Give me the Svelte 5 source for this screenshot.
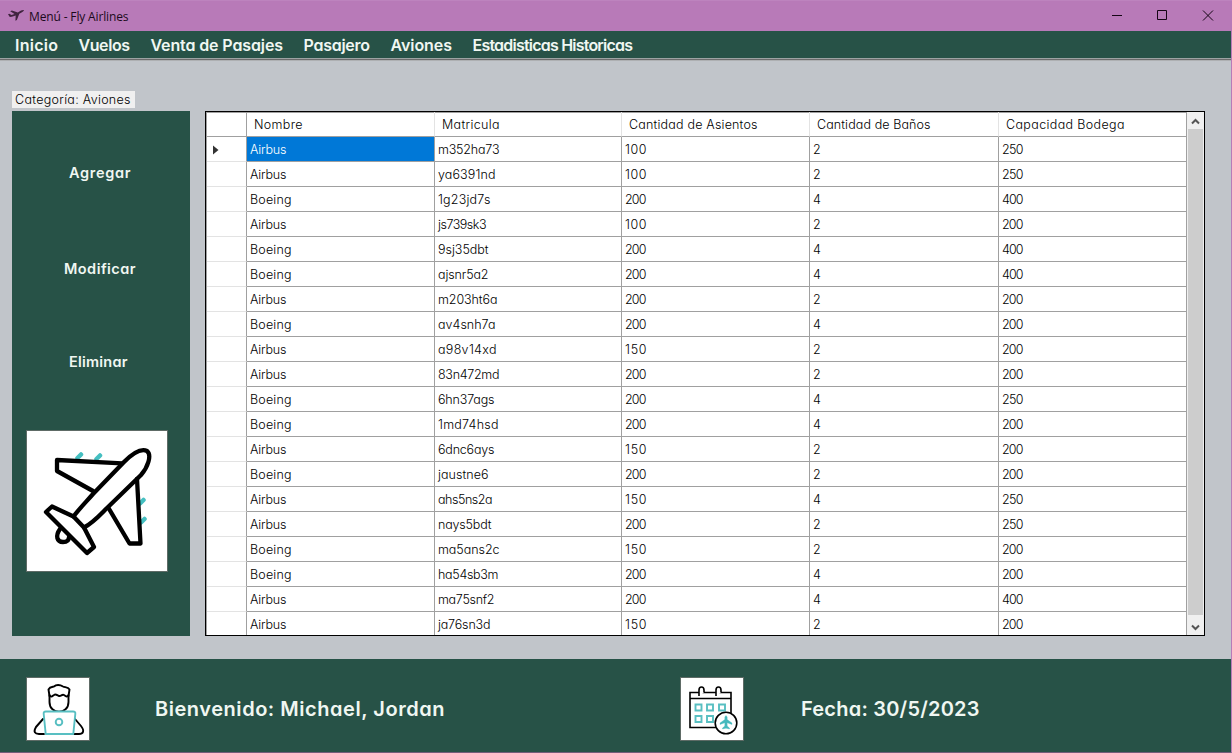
<script>
  const menu = [
    ['Inicio', 42.5], ['Vuelos', 51], ['Venta de Pasajes', 132],
    ['Pasajero', 66], ['Aviones', 61], ['Estadisticas Historicas', 160]
  ];
  const columns = [
    ['Nombre', 48], ['Matricula', 57], ['Cantidad de Asientos', 128],
    ['Cantidad de Baños', 113], ['Capacidad Bodega', 118]
  ];
  const rows = [
    ['Airbus', 'm352ha73', 61, '100', '2', '250'],
    ['Airbus', 'ya6391nd', 57, '100', '2', '250'],
    ['Boeing', '1g23jd7s', 52, '200', '4', '400'],
    ['Airbus', 'js739sk3', 48, '100', '2', '200'],
    ['Boeing', '9sj35dbt', 50, '200', '4', '400'],
    ['Boeing', 'ajsnr5a2', 50, '200', '4', '400'],
    ['Airbus', 'm203ht6a', 59, '200', '2', '200'],
    ['Boeing', 'av4snh7a', 57, '200', '4', '200'],
    ['Airbus', 'a98v14xd', 58, '150', '2', '200'],
    ['Airbus', '83n472md', 61, '200', '2', '200'],
    ['Boeing', '6hn37ags', 56, '200', '4', '250'],
    ['Boeing', '1md74hsd', 60, '200', '4', '200'],
    ['Airbus', '6dnc6ays', 56, '150', '2', '200'],
    ['Boeing', 'jaustne6', 50, '200', '2', '200'],
    ['Airbus', 'ahs5ns2a', 54, '150', '4', '250'],
    ['Airbus', 'nays5bdt', 53, '200', '2', '250'],
    ['Boeing', 'ma5ans2c', 61, '150', '2', '200'],
    ['Boeing', 'ha54sb3m', 60, '200', '4', '200'],
    ['Airbus', 'ma75snf2', 56, '200', '4', '400'],
    ['Airbus', 'ja76sn3d', 52, '150', '2', '200']
  ];

  // Spreads a label's letters so that it takes the given width.
  function fit(node, width) {
    const gaps = node.textContent.length - 1;
    if (gaps < 1) return;
    const gap = (width + 0.5 - node.getBoundingClientRect().width) / gaps;
    node.style.letterSpacing = `${gap}px`;
    node.style.marginRight = `${-gap}px`;
  }
</script>

<div class="window">
  <header class="titlebar">
    <svg class="logo" width="16" height="14" viewBox="0 0 16 14">
      <path d="M0 5.2l1.3-.5 2.2 1.4 3-1.2L2.2 2.2l1.7-.6L9.8 3.4 13 1.500c1.2-.6 2.5-.8 2.8-.4.3.6-.7 1.6-1.8 2.2l-2.7 1.5-2.4 6.1-1.500.8.3-5.3-3.9 1.400-2 .1z" fill="#40243f" />
    </svg>
    <span class="title" use:fit={99}>Menú - Fly Airlines</span>
    <div class="controls">
      <svg viewBox="0 0 12 12"><path d="M2 5.500h10" /></svg>
      <svg viewBox="0 0 12 12"><path d="M1.500 .5h9v9h-9z" /></svg>
      <svg viewBox="0 0 12 12"><path d="M1 .5l10 10M11 .5L1 10.500" /></svg>
    </div>
  </header>

  <nav>
    {#each menu as [label, width]}
      <div class="item"><span use:fit={width}>{label}</span></div>
    {/each}
  </nav>

  <main>
    <div class="category"><span use:fit={115}>Categoría: Aviones</span></div>
    <div class="content">
      <aside>
        <button class="add"><span use:fit={61}>Agregar</span></button>
        <button class="edit"><span use:fit={71}>Modificar</span></button>
        <button class="remove"><span use:fit={58}>Eliminar</span></button>
        <svg class="plane" width="142" height="142" viewBox="0 0 142 142">
          <rect x=".5" y=".5" width="141" height="141" fill="#fff" stroke="#5e6b66" />
          <g fill="none" stroke-linecap="round" stroke-linejoin="round">
            <path d="M51.500 28l3.500-3.500M70.500 29l3.500-3.500M114 73.500l3.500-3.500M115 92.500l3.500-3.500" stroke="#45bfc1" stroke-width="4.500" />
            <g stroke="#000" stroke-width="4.300">
              <path d="M47.500 86.500C53 79 60 72 67 64L98 32C106 24 115 18 121 21C126 25 122 37 115 45L81 78C74 85 67 93 58 97.500" />
              <path d="M96 33.300L31 30V41L67 61" />
              <path d="M111 49L114.500 113.500H103.500L82.500 78" />
              <path d="M47.500 86.500L26 76.500L20 82L61 123L68 117L58 97.500Z" />
              <path d="M34 99C29 106 31 112 37 112C41 112 43 110 43 107" />
            </g>
          </g>
        </svg>
      </aside>

      <section class="grid">
        <div class="table">
          <div class="row head">
            <div class="marker"></div>
            {#each columns as [label, width]}
              <div class="cell"><span use:fit={width}>{label}</span></div>
            {/each}
          </div>
          {#each rows as [name, plate, width, seats, baths, hold], i}
            <div class="row">
              <div class="marker">
                {#if i === 0}
                  <svg width="6" height="10" viewBox="0 0 6 10"><path d="M0 .5L5.500 5 0 9.500z" fill="#333" /></svg>
                {/if}
              </div>
              <div class="cell" class:selected={i === 0}><span use:fit={name === 'Airbus' ? 36 : 41}>{name}</span></div>
              <div class="cell"><span use:fit={width}>{plate}</span></div>
              <div class="cell"><span use:fit={21}>{seats}</span></div>
              <div class="cell"><span>{baths}</span></div>
              <div class="cell"><span use:fit={21}>{hold}</span></div>
            </div>
          {/each}
        </div>
        <div class="scrollbar">
          <svg class="up" width="9" height="7" viewBox="0 0 9 7"><path d="M1 5.500l3.500-3.500L8 5.500" /></svg>
          <div class="thumb"></div>
          <svg class="down" width="9" height="7" viewBox="0 0 9 7"><path d="M1 1.500L4.500 5 8 1.500" /></svg>
        </div>
      </section>
    </div>
  </main>

  <footer>
    <svg width="64" height="64" viewBox="0 0 64 64">
      <rect x=".5" y=".5" width="63" height="63" fill="#fff" stroke="#5e6b66" />
      <g fill="none" stroke="#000" stroke-width="1.900" stroke-linecap="round" stroke-linejoin="round">
        <path d="M23.500 19L22.500 12.500C24 9.500 27 10 28 9.500C30 7.500 34 7.500 37 9.500C39 10.500 42 10 43.500 12.500L42.500 19" />
        <path d="M23.500 18C25 21 26.500 19 28 18C30 16.500 31 18.500 33 19C35 19.500 36 17 38 18C40 19.500 41 20.500 42.500 18V25C42.500 38 23.500 38 23.500 25Z" />
        <path d="M17 42L10 50C7 55 9 57 13 57H18M49 42L55 49C59 54 57 57 53 57H48" />
        <path d="M20 34.500H47C49 34.500 49.500 35.500 49.300 37L47.300 57H19.700L17.700 37C17.500 35.500 18 34.500 20 34.500Z" fill="#fff" stroke="#58bfc2" />
        <circle cx="33" cy="45" r="3.300" stroke="#58bfc2" />
      </g>
    </svg>
    <div class="welcome"><span use:fit={289}>Bienvenido: Michael, Jordan</span></div>
    <svg width="64" height="64" viewBox="0 0 64 64">
      <rect x=".5" y=".5" width="63" height="63" fill="#fff" stroke="#5e6b66" />
      <g fill="none" stroke="#000" stroke-width="1.600">
        <path d="M10 15.500H51V50.500H10ZM10 21.500H51" />
        <path d="M19 19V13C19 9 24 9 24 13V15.500M36 19V13C36 9 41 9 41 13V15.500" fill="#fff" />
        <path d="M15.500 27.500h6v6h-6zM27 27.500h6v6h-6zM39 27.500h6v6h-6zM15.500 39h6v6h-6zM27 39h6v6h-6z" stroke="#58bfc2" stroke-width="1.900" />
        <circle cx="46" cy="46" r="10.800" fill="#fff" />
        <path d="M46 38.500L47.200 40V42.500L52 46V47.500L47.200 45.800V49L49.500 51V52L46 51.200L42.500 52V51L44.800 49V45.800L40 47.500V46L44.800 42.500V40Z" fill="#45b9bd" stroke="#45b9bd" stroke-width=".3" />
      </g>
    </svg>
    <div class="date"><span use:fit={178}>Fecha: 30/5/2023</span></div>
  </footer>
</div>

<style>
  :global(body) { margin: 0; overflow: hidden; }
  .window {
    box-sizing: border-box;
    width: 1232px;
    height: 753px;
    display: flex;
    flex-direction: column;
    background: #c1c5ca;
    border-right: 1px solid #b87ab8;
    border-bottom: 1px solid #735d79;
    font-family: "Century Gothic", Inter, sans-serif;
    font-feature-settings: "cv11" 1;
    color: #000;
  }
  span { white-space: nowrap; }
  .titlebar {
    height: 31px;
    flex: none;
    box-sizing: border-box;
    display: flex;
    align-items: center;
    padding-left: 8px;
    margin-right: -1px;
    background: #b87ab8;
    border-top: 1px solid #bd83be;
  }
  .title { margin-left: 5px; padding-top: 1px; font: 12px/16px "Segoe UI", "Open Sans", sans-serif; color: #1b0a1b; }
  .controls { margin-left: auto; display: flex; gap: 34px; padding-right: 18px; }
  .controls svg { width: 12px; height: 12px; fill: none; stroke: #150515; stroke-width: 1; }
  nav {
    height: 27px;
    flex: none;
    display: flex;
    gap: 20.500px;
    padding-left: 15px;
    align-items: center;
    background: #275247;
    border-bottom: 1px solid #9da3a3;
    box-shadow: 0 1px #6c6c6c, 0 2px #aeb0b2;
    font-size: 16px;
    font-weight: 600;
    color: #f0f7f2;
  }
  nav .item { line-height: 27px; padding-top: 1px; }
  main { height: 600px; flex: none; box-sizing: border-box; padding: 32px 0 0 12px; }
  .category {
    width: 120px;
    height: 17px;
    padding-left: 3px;
    background: #f0f0f0;
    font-size: 12.500px;
    font-weight: 300;
    line-height: 17px;
  }
  .content { display: flex; gap: 15px; margin-top: 3px; }
  aside {
    width: 178px;
    height: 525px;
    display: flex;
    flex-direction: column;
    background: #275247;
  }
  button {
    display: block;
    padding: 0;
    border: 0;
    background: none;
    height: 24px;
    font: 600 14.500px/24px "Century Gothic", Inter, sans-serif;
    font-feature-settings: inherit;
    text-align: left;
    color: #f0f7f2;
  }
  .add { margin: 50px 0 0 57px; }
  .edit { margin: 72px 0 0 52px; }
  .remove { margin: 69px 0 0 57px; }
  .plane { margin: 56px 0 0 14px; }
  .grid {
    box-sizing: border-box;
    width: 1000px;
    height: 525px;
    display: flex;
    overflow: hidden;
    border: 1px solid #000;
    background: #fff;
  }
  .table { box-shadow: inset 1px 0 #a0a0a0; }
  .row {
    display: grid;
    grid-template-columns: 41px 188px 187px 188px 189px 188px;
    grid-template-rows: 25px;
    height: 25px;
    font-size: 12.500px;
    font-weight: 300;
    line-height: 25px;
  }
  .marker, .cell { box-sizing: border-box; border-right: 1px solid #a0a0a0; border-bottom: 1px solid #a0a0a0; }
  .marker { display: flex; align-items: center; margin-left: 1px; padding: 2px 0 0 6px; border-bottom-color: #e3e3e3; }
  .cell { padding-left: 3px; }
  .head .marker { border-bottom-color: #a0a0a0; }
  .head .cell { padding-left: 7px; border-right-color: #e3e3e3; }
  .head .cell:last-child { border-right-color: #a0a0a0; }
  .head { box-shadow: inset 0 1px #a0a0a0; }
  .selected { background: #0078d7; color: #fff; }
  .scrollbar {
    width: 17px;
    display: flex;
    flex-direction: column;
    align-items: center;
    background: #f0f0f0;
  }
  .scrollbar svg { fill: none; stroke: #555; stroke-width: 2; }
  .up { margin: 6px 0 4px; }
  .thumb { width: 15px; height: 486px; background: #cdcdcd; }
  .down { margin-top: 9px; }
  footer {
    flex: 1;
    display: flex;
    align-items: flex-start;
    box-sizing: border-box;
    padding: 18px 0 0 26px;
    background: #275247;
    font-size: 20px;
    font-weight: 600;
    line-height: 64px;
    color: #f0f7f2;
  }
  .welcome { width: 290px; margin: 0 235px 0 65px; }
  .date { margin-left: 57px; }
</style>
